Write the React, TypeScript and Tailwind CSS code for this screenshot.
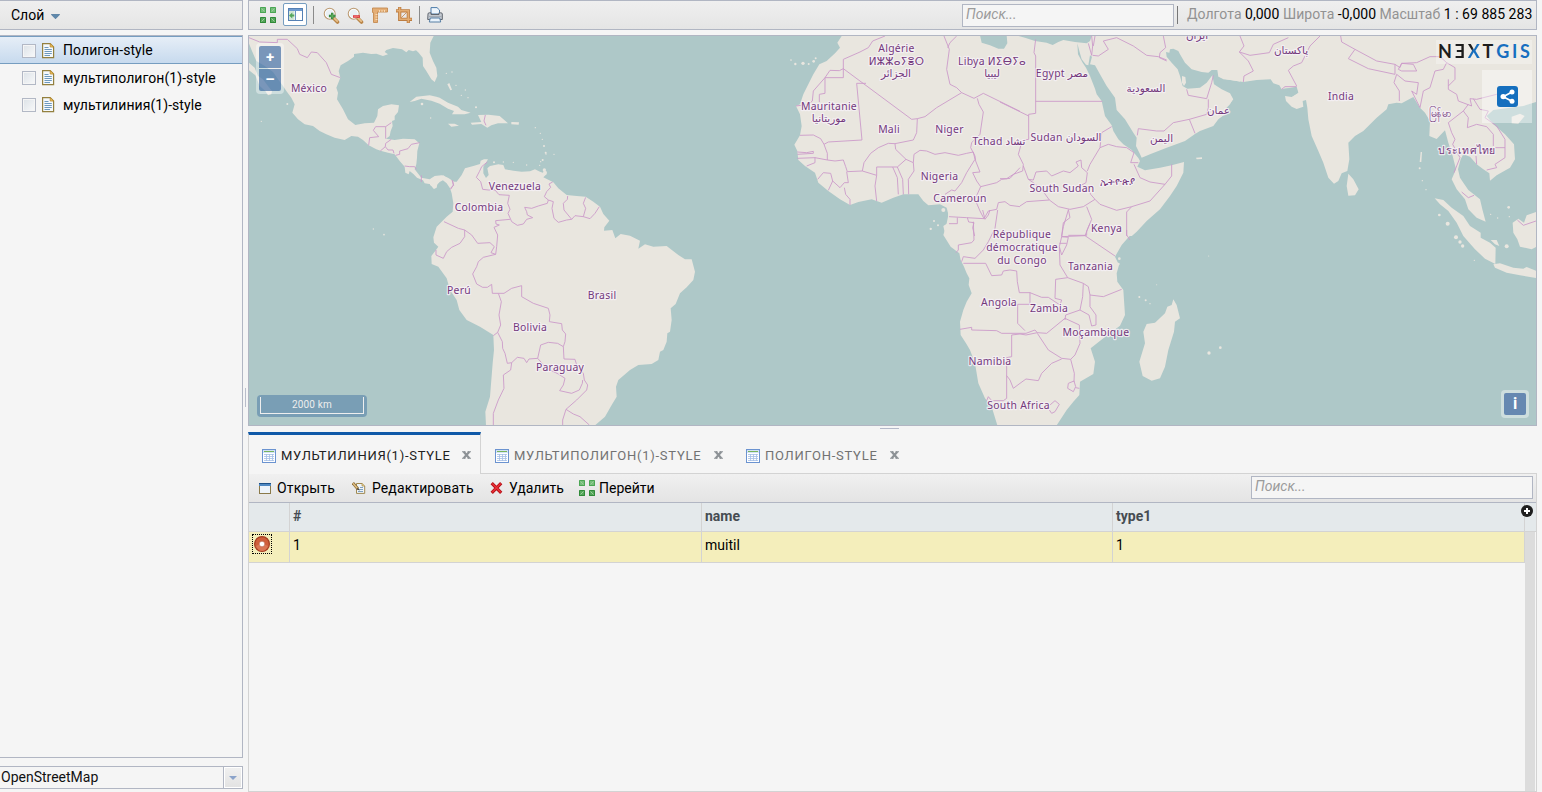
import React from 'react';

const NA_BORDERS = [
  '3,5 35,18 88,20 88,10 118,10 148,38 155,55 178,65 190,48 208,50 235,80 250,115 277,125',
  '362,328 365,305 392,302 376,283 383,272 413,272 413,308', '413,272 430,260', '430,310 413,322 412,332 397,345', '412,332 420,342 435,342 438,352',
  '443,358 455,355 455,345 480,338 490,325 515,320', '470,390 485,392 500,392 505,400', '520,418 520,438', '612,432 617,448 607,457',
  '712,237 708,255 714,268',
];
const SA_BORDERS = [
  '172,36 155,50 148,65 139,82 152,95 158,118 175,120 195,120 207,134 238,136 233,160 240,178 234,190 245,215 262,226 280,222 290,208 308,203 292,195 290,185 284,172 305,175 325,168 352,160 355,150 343,140 350,125 362,112 357,102 368,96',
  '355,150 370,155 366,175 372,205 385,217 410,210 425,208 435,197 460,200 480,206 495,190 508,170',
  '425,208 402,180 400,160 412,148 413,138', '460,200 467,175 460,160 467,142',
  '240,208 197,212 198,222 208,225 192,232 203,255 200,290 197,313 183,308 193,290 180,278 143,280 125,255 104,240 85,235 42,215',
  '104,240 104,260 90,280 65,292 50,305 40,325 18,315 18,300',
  '197,313 160,322 145,335 140,350 128,372 140,402 158,412 172,412 185,403 187,430 205,430 222,430 245,415 275,407 275,440 310,460 355,475 360,495 358,515 395,521 397,540 407,552 405,575 400,590 383,580 355,577 332,585 323,625 297,627 290,638 282,625 262,622 245,638 232,640 225,610 218,595 217,575 203,547 212,525 207,495 214,455 205,430',
  '203,547 190,557', '245,638 242,660 220,675 222,715 205,750 190,790 190,825',
  '400,590 402,627 435,628 440,645 460,670 463,690 473,705 470,720 440,750 408,778 398,810 398,825',
  '323,625 350,655 385,672 405,685 400,705 389,722 425,730 448,720 457,700 458,690', '408,778 430,792 450,800 478,825', '68,92 70,105 62,118',
];
const WA_BORDERS = [
  '315,0 278,15 265,35 240,48 190,70 190,125 135,125 135,172 118,175 118,198', '190,98 178,104 150,103 135,125 100,165 97,195 85,205 48,210',
  '190,98 395,250 412,248 435,242 470,215 545,170 582,187 610,172 720,226', '258,142 230,142 246,312 145,318 132,325 122,308 100,297 60,298',
  '412,248 410,290 400,312 345,323 325,322 295,335 272,352 252,380 247,405 290,418', '132,325 142,352 142,372',
  '52,367 105,365 142,372 165,375 190,372 197,392 202,407 247,405', '52,348 80,350 100,346 100,352 52,355', '105,365 105,380 80,390',
  '113,430 130,410 152,412 158,435 145,463', '158,435 180,455 193,440 205,440 200,407', '193,455 197,475 210,490 210,507',
  '290,495 285,450 290,418 290,393 352,393', '345,323 347,340 378,370 352,393', '338,393 352,425 355,475', '352,393 368,430 370,475',
  '378,370 400,380 402,405 385,430 386,475', '400,380 402,355 420,343 440,345 465,355 495,350 535,358 560,352 580,348 585,370 560,410 545,440 525,465 515,462 495,475',
  '592,187 597,205 610,228 600,295 575,320 572,335 585,360 587,375 600,408 578,410 590,435 602,452', '602,452 650,440 665,430 690,427 720,395',
  '602,452 585,490 600,525 612,548', '492,0 508,40 500,100 510,145 530,155 545,170', '530,0 510,20 503,35',
  '507,542 560,545 612,548 625,525 650,520 655,500 675,497 690,508 720,512', '532,545 532,563 507,563', '562,545 566,558 582,560 578,575 584,600',
];
const EA_BORDERS = [
  '107,10 102,50 107,60 107,232 86,235 86,310 72,312', '0,198 86,240', '107,196 307,196',
  '75,310 62,330 55,355 70,385 68,405 40,415 20,428 0,428',
  '70,390 85,430 100,432 108,408 140,405 155,420 190,405 210,410 235,390 228,378 243,372 245,395 262,410 258,440 240,450',
  '85,430 100,440 125,460 148,492', '60,510 80,497 148,492 175,512 210,520 250,512 285,490 272,475 262,450',
  '262,405 270,385 300,335 305,290 335,272', '300,335 325,325 350,332 380,335 402,350 392,380 415,380', '402,385 420,425 450,438 495,445 515,420 515,385',
  '495,445 450,495 395,512 380,528 380,600', '285,490 300,505 350,523 395,512', '205,520 210,545 190,560 185,600', '260,512 275,550 260,585 260,598 205,598',
  '278,58 295,60 325,40 310,15 350,5 400,30 440,58 475,62 500,72', '490,0 497,35 480,50 478,65 500,75', '560,160 565,178 620,188 635,140 640,118',
  '625,190 625,215 620,235 568,250 520,260 492,285 470,285 415,278 412,298', '568,250 585,292', '265,22 275,58', '275,0 278,30 275,58', '285,0 280,30',
];
const SAF_BORDERS = [
  '188,0 195,28 205,15 210,0', '233,0 225,55 205,95 190,120 165,145 130,140 125,155', '160,35 162,90 155,98 115,105 115,120 108,128',
  '130,160 197,160 215,197 245,195 250,183 270,180 290,183 292,215 298,248 330,248 330,283 293,283 293,340 315,362',
  '120,358 155,352 155,360 230,362 245,370 318,370 345,360 352,368 380,370 435,325 478,345 480,400 465,435 452,448 425,445 385,420 352,370',
  '275,375 275,440 260,443 260,565 250,572', '275,375 300,372 318,375 352,368', '260,497 270,510 280,535 300,520 318,507 355,512 365,490 395,460 425,447',
  '452,448 463,490 462,515', '445,520 462,513 467,530 460,545 443,535 445,520', '467,533 478,535', '390,585 405,572 418,583 405,605 395,610 388,600',
  '330,248 365,262 385,262 420,285 425,270 405,265 407,208 443,203 490,220 488,260 480,300 437,315 435,330', '443,203 420,165 418,110 425,80 495,77 585,138',
  '490,220 505,230 510,255 510,290 528,315 528,345 515,348 507,315 480,300', '510,255 550,260 605,238', '445,0 430,50 425,80', '425,80 445,82 440,105 425,135 418,110',
  '418,100 440,100', '620,60 620,75 630,90', '510,40 495,77', '200,572 205,560 215,572 250,572',
];
const AS_BORDERS = [
  '30,0 42,30 28,48 60,58 118,50 130,25 175,5', '28,48 55,75 70,105 42,120 40,138', '270,0 240,30 215,80 190,90 175,103 200,150', '155,160 165,152 200,152',
  '332,0 335,18 375,40 440,75 495,85 495,115 415,98 355,68 375,40', '505,100 515,82 550,85 560,105 515,105 505,100',
  '495,85 510,95 515,82 560,80 600,62 630,62 650,80 675,95 675,130 655,150', '500,115 525,135 565,140 560,175 545,165 570,215', '500,115 492,140 508,165 508,195',
  '650,80 640,100 615,105 600,155 580,165 570,215', '655,130 655,160 680,175 685,195 725,210', '725,210 720,188 740,190 800,175 820,180',
  '715,205 700,225 655,260 665,290 675,310 668,325 690,365 672,410', '700,225 715,245 712,275 740,265 770,272 790,295 790,330',
  '730,188 750,220 775,225 765,245 800,270 825,310 825,365 795,385 800,395 770,402', '740,385 738,360', '795,335 825,335', '695,468 715,485 732,478',
  '862,552 880,568 918,555',
];

const Borders = ({ lines }: { lines: string[] }) => (
  <g fill="none" stroke="#cc9bca" strokeWidth="2.7" strokeLinejoin="round">
    {lines.map((l, i) => <polyline key={i} points={l} />)}
  </g>
);

const Dots = ({ at }: { at: number[][] }) => (
  <g>{at.map(([x, y, r], i) => <circle key={i} cx={x} cy={y} r={r} />)}</g>
);

const LABELS: [string, number, number][] = [
  ['México', 309, 92], ['Venezuela', 515, 189.5], ['Colombia', 479, 210.5], ['Perú', 459, 293.5], ['Brasil', 602, 298.5], ['Bolivia', 530, 331], ['Paraguay', 560, 371],
  ['Algérie', 896.5, 52], ['ⵍⵣⵣⴰⵢⴻⵔ', 896.5, 64.5], ['الجزائر', 896, 77], ['Libya ⵍⵉⴱⵢⴰ', 992, 65], ['ليبيا', 992, 77],
  ['Egypt مصر', 1062, 76.5], ['Mauritanie', 829, 109.5], ['موريتانيا', 829, 121.5], ['Mali', 889, 133], ['Niger', 949.5, 133], ['Tchad تشاد', 999, 145],
  ['Sudan السودان', 1066, 141], ['Nigeria', 939.5, 180], ['Cameroun', 960, 202], ['South Sudan', 1062, 192], ['ኢትዮጵያ', 1118, 185],
  ['Kenya', 1106.5, 231.5], ['République', 1022, 238], ['démocratique', 1022, 251], ['du Congo', 1022, 263.5], ['Tanzania', 1090.5, 270],
  ['Angola', 999, 305.5], ['Zambia', 1049, 312], ['Moçambique', 1096, 335.5], ['Namibia', 990, 364.5], ['South Africa', 1018.5, 409],
  ['السعودية', 1146, 91.5], ['اليمن', 1161.5, 142], ['عمان', 1218.5, 113.5], ['ایران', 1197, 39], ['پاکستان', 1291, 54], ['India', 1341, 100], ['မြန်မာ', 1440, 117],
  ['ประเทศไทย', 1467, 154],
];

const T3 = (x: number, y: number) => `translate(${x} ${y}) scale(0.33333)`;
const LAND = '#e9e6df';
const SEA = '#aec8c8';

const WorldMap = () => (
  <svg viewBox="249 36 1287 389" className="block h-[389px] w-[1287px]">
    <rect x="249" y="36" width="1287" height="389" fill={SEA} />
    <g fill={LAND}>
      <g transform={T3(248, 36)}>
        <path d="M0,0 L557,0 L547,20 545,50 555,75 565,95 568,120 560,138 550,130 535,105 525,90 524,65 512,50 504,43 495,46 482,42 475,49 462,40 435,36 415,42 410,48 420,55 405,60 385,53 370,54 345,50 318,54 318,62 300,75 278,88 272,105 277,125 265,155 270,170 267,190 285,220 300,250 322,267 350,262 378,260 388,240 390,220 405,210 430,205 453,208 450,228 440,240 440,252 432,255 434,270 428,285 425,300 414,308 440,312 465,308 500,310 514,322 508,345 507,365 505,385 500,400 520,425 545,430 560,420 580,418 600,425 625,442 620,462 610,455 604,435 590,430 575,438 568,445 566,455 556,458 548,445 530,442 525,433 507,425 497,415 485,405 482,415 472,410 470,392 455,375 440,355 420,350 400,345 385,340 362,328 345,312 330,302 310,300 290,312 260,305 235,295 215,285 195,270 170,265 150,250 133,230 140,205 130,185 115,165 105,150 90,130 75,108 50,90 25,75 12,45 0,15 Z" />
        <path d="M0,78 L20,95 30,120 45,130 60,150 72,165 70,175 60,178 52,165 35,150 22,118 0,100Z" />
        <path d="M485,198 L505,182 545,178 565,182 575,185 600,200 630,212 640,222 668,230 650,235 612,235 618,225 600,218 575,203 550,194 520,188 500,195Z" />
        <path d="M600,263 L620,263 633,269 610,272Z M668,260 L700,258 690,237 722,236 755,240 780,262 750,262 730,268 718,275 700,264 672,266Z M790,258 L813,259 812,266 790,265Z M598,145 l6,-4 8,20 -5,2z" />
        <Dots at={[[522, 204, 4], [595, 112, 2], [612, 108, 2], [624, 148, 2], [652, 162, 2], [640, 178, 2], [684, 214, 3], [660, 185, 2], [548, 246, 2], [40, 256, 2], [118, 204, 3], [408, 596, 2.5], [376, 579, 2], [862, 275, 2], [877, 292, 2], [883, 310, 2], [888, 330, 3], [893, 350, 3], [884, 372, 3], [875, 388, 2], [891, 410, 6]]} />
      </g>
      <g transform={T3(430, 150)}>
        <path d="M0,88 L40,76 68,95 80,95 95,75 105,55 130,48 150,42 152,32 162,28 174,28 168,38 160,50 160,70 168,84 176,75 172,55 180,48 205,43 220,45 225,58 250,62 275,65 300,64 315,58 330,65 350,72 340,82 370,97 385,115 410,135 440,138 467,140 490,155 510,170 520,192 538,212 523,232 522,242 547,240 556,265 572,252 600,257 630,272 625,296 645,283 670,290 710,288 745,315 765,328 785,328 795,365 790,390 770,412 750,430 737,462 722,475 725,510 720,545 712,550 710,575 700,600 690,605 685,630 665,642 625,645 600,660 565,690 558,710 560,740 545,765 525,800 495,826 168,826 166,785 180,740 188,640 192,600 190,555 150,530 110,510 88,480 80,450 60,420 50,385 25,350 5,342 4,318 18,300 25,290 12,278 10,262 20,230 50,200 68,185 70,160 65,130 60,115 50,100 35,88 20,105 15,117 0,105Z" />
        <Dots at={[[192, 37, 3], [348, 12, 2], [372, 13, 2], [343, 60, 5], [220, 36, 2], [250, 37, 2], [290, 45, 2], [332, 35, 2]]} />
      </g>
      <g transform={T3(780, 36)}>
        <path d="M185,0 L172,20 180,35 165,52 140,75 118,85 100,115 85,145 70,175 60,205 48,210 60,235 65,270 60,298 43,326 52,345 55,372 75,390 105,410 115,440 145,465 180,490 210,507 235,498 275,490 305,500 340,485 370,475 415,475 430,495 445,508 480,505 500,515 505,535 505,560 490,570 497,602 722,602 722,0Z" />
        <Dots at={[[33, 72, 2.5], [46, 84, 3.5], [69, 82, 5], [86, 84, 3], [101, 76, 4], [107, 67, 3], [490, 522, 6], [474, 568, 3], [452, 578, 3]]} />
      </g>
      <rect x="1000" y="36" width="240" height="200" />
      <g transform={T3(920, 210)}>
        <path d="M84,-5 L84,20 78,50 70,75 92,110 118,130 122,150 132,170 140,190 148,205 146,225 155,250 140,275 130,300 120,335 122,375 138,400 150,420 165,460 175,520 195,565 215,590 232,646 410,646 440,600 460,575 478,555 480,515 520,492 525,455 512,415 550,385 600,347 615,315 610,240 592,215 590,190 597,165 585,140 605,105 640,65 690,25 722,-2Z" />
        <path d="M760,268 L770,285 780,325 765,335 762,365 745,420 735,470 720,505 695,512 668,498 658,455 675,400 670,365 680,342 705,338 735,310 742,290 755,285Z" />
        <Dots at={[[867, 429, 5], [901, 413, 4], [32, 57, 3], [658, 261, 3], [677, 271, 3], [690, 281, 2], [598, 146, 4], [595, 162, 4], [42, 33, 3], [710, 224, 1.5], [866, 138, 1.5]]} />
      </g>
    </g>
    <g transform={T3(780, 36)} fill={SEA}><path d="M600,-2 L605,20 630,28 655,38 672,38 682,22 680,-2Z" /></g>
    <g transform={T3(1000, 36)}>
      <path fill={SEA} d="M48,-2 L75,5 105,15 140,20 158,27 175,18 190,12 225,18 260,22 270,15 276,-2Z M232,22 L234,55 248,80 258,95 270,120 285,158 290,175 305,195 315,240 335,268 340,285 355,310 370,325 395,342 415,366 420,375 412,392 435,403 480,395 515,388 552,378 550,410 530,450 510,480 480,520 440,555 410,587 393,602 723,602 723,137 680,130 655,122 652,102 635,102 625,110 605,108 575,100 555,80 540,55 535,45 520,38 510,40 508,50 498,48 500,62 515,80 533,100 540,120 548,150 562,158 600,155 620,140 637,118 642,145 665,160 690,172 699,188 690,205 680,215 675,235 655,250 640,270 600,285 585,294 555,315 500,335 450,355 425,365 418,350 408,330 410,305 400,290 375,250 350,222 345,185 320,150 300,115 285,88 270,85 276,62 270,58 265,88 258,86 245,70 238,45Z" />
      <path fill={LAND} d="M546,120 L556,123 558,140 552,150 546,140Z M588,365 L606,364 606,369 590,370Z" />
    </g>
    <g transform={T3(1230, 36)} fill={LAND}>
      <path d="M-32,-2 L-32,123 -20,130 0,132 40,138 80,132 122,130 130,142 148,148 155,160 200,152 205,170 185,183 165,180 168,195 185,212 200,219 220,212 218,195 228,192 232,215 235,250 245,300 265,345 280,380 295,425 312,443 325,435 335,412 352,405 358,370 355,320 375,300 400,285 440,245 470,220 475,205 500,200 515,202 550,183 570,215 585,230 600,255 598,300 620,309 645,283 655,320 668,360 678,400 665,430 680,460 705,490 715,520 740,545 767,557 757,520 750,490 735,478 715,462 700,440 690,425 684,400 692,370 700,355 720,362 740,385 760,400 778,412 780,434 800,418 840,395 855,370 852,325 825,295 790,265 770,240 790,222 840,215 880,210 920,197 920,-2Z" />
      <path d="M355,413 L370,430 386,460 375,478 355,479 350,450Z M614,487 L640,492 665,515 700,540 720,570 752,590 752,605 780,620 797,635 796,684 765,668 735,640 700,600 680,560 655,525 630,505Z M790,685 L810,682 850,695 880,698 890,693 920,705 920,726 870,718 830,710 795,695Z M920,527 L890,538 882,560 865,548 848,560 850,590 862,610 870,632 905,640 920,632Z M845,242 L870,233 884,240 865,263 845,262Z M782,612 L800,612 808,630 795,625Z M572,348 l4,0 -2,30 -5,0z" />
      <path d="M-2,183 L10,190 -2,205Z" />
      <Dots at={[[830, 631, 6], [836, 514, 4], [653, 563, 6], [628, 537, 4], [678, 604, 6], [690, 618, 5], [698, 630, 5], [569, 397, 3], [577, 434, 2], [588, 461, 2], [733, 673, 2], [838, 542, 2], [782, 535, 2], [803, 546, 2]]} />
      <path fill={SEA} d="M160,158 L200,156 203,170 188,180 165,176 182,165Z" />
    </g>
    <g transform={T3(248, 36)}><Borders lines={NA_BORDERS} /></g>
    <g transform={T3(430, 150)}><Borders lines={SA_BORDERS} /></g>
    <g transform={T3(780, 36)}><Borders lines={WA_BORDERS} /></g>
    <g transform={T3(1000, 36)}><Borders lines={EA_BORDERS} /></g>
    <g transform={T3(920, 210)}><Borders lines={SAF_BORDERS} /></g>
    <g transform={T3(1230, 36)}><Borders lines={AS_BORDERS} /></g>
    <g className="font-['Noto_Sans','DejaVu_Sans',sans-serif] text-[10.4px] tracking-[0.28px]" fill="#74397c" stroke="#f6f1f6" strokeOpacity="0.85" strokeWidth="2.4" strokeLinejoin="round" style={{ paintOrder: 'stroke' }} textAnchor="middle">
      {LABELS.map(([t, x, y]) => <text key={t} x={x} y={y}>{t}</text>)}
    </g>
  </svg>
);

const Arrows = () => (
  <svg viewBox="0 0 16 16" className="size-4 shrink-0">
    {[[0, 0], [10, 0], [0, 10], [10, 10]].map(([x, y], i) => (
      <g key={i} transform={`translate(${x} ${y})`}>
        <rect width="6" height="6" rx="0.6" fill={i > 1 ? '#2f8a38' : '#4aa653'} />
        <rect x="1" y="1" width="4" height="4" fill={i > 1 ? '#56a55c' : '#76bd7b'} />
        <path d={i === 0 || i === 3 ? 'M1.5,1.5 L4.5,4.5' : 'M4.5,1.5 L1.5,4.5'} stroke="#98d098" strokeWidth="1" />
      </g>
    ))}
  </svg>
);

const Magnifier = ({ plus }: { plus?: boolean }) => (
  <svg viewBox="0 0 17 17" className="h-[17px] w-[17px] shrink-0">
    <path d="M10.5,11 L14.5,15" stroke="#b98548" strokeWidth="3.6" strokeLinecap="round" />
    <path d="M10.8,10.8 L14.2,14.2" stroke="#e8c08a" strokeWidth="1.8" strokeLinecap="round" />
    <circle cx="6.7" cy="6.7" r="5.4" fill="#e9f0f4" stroke="#bd9c74" strokeWidth="1.2" />
    <circle cx="6.7" cy="6.7" r="4.4" fill="none" stroke="#fff" strokeWidth="0.9" />
    {plus
      ? <path d="M9.2,5.7 V12.3 M5.9,9 H12.5" stroke="#2c7d34" strokeWidth="2.3" />
      : <path d="M6,9.5 H13" stroke="#d9262c" strokeWidth="2.4" />}
    {plus ? <path d="M9.2,6.4 V11.6 M6.6,9 H11.8" stroke="#6bbb68" strokeWidth="0.9" /> : <path d="M6.6,9.4 H12.4" stroke="#f47b77" strokeWidth="0.9" />}
  </svg>
);

const TableIcon = () => (
  <svg viewBox="0 0 14 14" className="size-[14px] shrink-0">
    <rect x="0.5" y="0.5" width="13" height="13" fill="#fff" stroke="#6b93d0" />
    <rect x="1" y="1" width="12" height="3" fill="#d3e2f5" />
    <path d="M2,2.5 H12" stroke="#78b45c" strokeWidth="1" />
    <path d="M2,5.5 H12 M2,7.5 H12 M2,9.5 H12 M2,11.5 H12 M4.5,5 V12 M7.5,5 V12 M10.5,5 V12" stroke="#a3bee6" strokeWidth="0.8" />
  </svg>
);

const DocIcon = () => (
  <svg viewBox="0 0 13 16" className="h-4 w-[13px] shrink-0">
    <path d="M0.6,0.6 H8.2 L11.6,4 V14.6 H0.6 Z" fill="#f5f9fc" stroke="#93803f" strokeWidth="1.2" />
    <path d="M8.2,0.6 V4 H11.6 Z" fill="#f3cc68" stroke="#b7862a" strokeWidth="0.8" />
    <path d="M2.5,4.5 H6.5 M2.5,6.5 H9.8 M2.5,8.5 H9.8 M2.5,10.5 H9.8 M2.5,12.5 H8" stroke="#6d99bd" strokeWidth="1" />
  </svg>
);

const Layer = ({ label, active }: { label: string; active?: boolean }) => (
  <div className={`flex items-center border-y pl-[22px] ${active ? 'h-7 border-[#769dc0] bg-gradient-to-b from-[#e6eef7] to-[#c7daee]' : 'h-[27px] border-transparent'}`}>
    <span className={`size-[14px] border border-[#b2b8c5] bg-gradient-to-br from-[#dce2e7] to-[#f8f9fa] shadow-[inset_0_0_0_1px_#f5f5f5] ${active ? 'mt-[2px]' : 'mt-[1px]'}`} />
    <span className="ml-[6px] flex pt-px"><DocIcon /></span>
    <span className="ml-2 text-sm leading-5 tracking-[0.06px] whitespace-nowrap text-black">{label}</span>
  </div>
);

const Tab = ({ label, active, textWidth }: { label: string; active?: boolean; textWidth: string }) => (
  <div className={`flex h-[42px] items-center border-t-[3px] pl-[13px] ${active ? 'border-x border-t-[#0f59a8] border-x-[#d3d3d3] pr-[9px] text-[#212121]' : 'border-b border-t-transparent border-b-[#d3d3d3] pl-[14px] pr-[9px] text-[#727272]'}`}>
    <span className={`flex ${active ? 'mt-[2px]' : 'mt-[3px]'}`}><TableIcon /></span>
    <span className={`ml-[5px] text-[13px] tracking-[0.74px] whitespace-nowrap uppercase ${active ? 'mt-[3px]' : 'mt-1'} ${textWidth}`}>{label}</span>
    <svg viewBox="0 0 9 8" className={`ml-3 h-2 w-[9px] ${active ? 'mt-px' : 'mt-[2px]'}`}><path d="M1.7,0.8 L7.3,7.2 M7.3,0.8 L1.7,7.2" stroke="#8d9296" strokeWidth="2.2" /><path d="M0,0.7 H3.5 M5.5,0.7 H9 M0,7.3 H3.5 M5.5,7.3 H9" stroke="#8d9296" strokeWidth="1.1" /></svg>
  </div>
);

const Cell = ({ children, first, head }: { children?: React.ReactNode; first?: boolean; head?: boolean }) => (
  <div className={`border-r border-[#d3d3d3] pt-[3px] pl-[3px] text-sm ${first ? 'w-[412px]' : 'w-[411px]'} ${head ? 'font-bold text-[#464c52]' : 'text-black'}`}>{children}</div>
);

export default function App() {
  return (
    <div className="flex h-[792px] w-[1542px] overflow-hidden bg-[#f5f5f5] font-[Roboto,sans-serif] text-sm text-black">
      <aside className="flex w-[243px] shrink-0 flex-col">
        <div className="flex h-[30px] items-center border-y border-r border-[#b1b6c3] bg-gradient-to-b from-[#efefef] to-[#e5e5e5] pl-[11px]">
          <span>Слой</span>
          <svg viewBox="0 0 9 5" className="mt-0.5 ml-[7px] h-[5px] w-[9px]"><path d="M0.3,0.5 H8.7 L4.5,4.8Z" fill="#5f89ac" stroke="#45719a" strokeWidth="0.7" /></svg>
        </div>
        <div className="mt-[5px] h-[723px] border-y border-r border-[#b1b6c3]">
          <Layer label="Полигон-style" active />
          <Layer label="мультиполигон(1)-style" />
          <Layer label="мультилиния(1)-style" />
        </div>
        <div className="mt-2 flex h-[23px] border-y border-r border-[#b1b6c3]">
          <span className="w-[224px] border-r border-[#b1b6c3] pl-px leading-[21px] text-[#111]">OpenStreetMap</span>
          <span className="flex flex-1 items-center justify-center border border-white bg-gradient-to-b from-[#f0f0f0] to-[#e3e3e3]">
            <svg viewBox="0 0 8 4" className="h-1 w-2"><path d="M0,0 H8 L4,4Z" fill="#8ba3ca" /></svg>
          </span>
        </div>
      </aside>
      <div className="flex w-[5px] shrink-0 items-center justify-center pt-0.5"><span className="h-[19px] w-px bg-[#b9bdca]" /></div>
      <main className="flex w-[1289px] shrink-0 flex-col">
        <div className="flex h-[30px] items-center border border-[#b1b6c3] bg-gradient-to-b from-[#efefef] to-[#e5e5e5] pl-[11px]">
          <Arrows />
          <span className="mb-px ml-[7px] flex h-[23px] w-6 items-center justify-center rounded-[2px] border border-[#769dc0] bg-white">
            <svg viewBox="0 0 15 13" className="h-[13px] w-[15px]">
              <rect x="0.5" y="0.5" width="14" height="12" fill="#fff" stroke="#5580b4" />
              <rect x="1" y="1" width="13" height="2" fill="#6f9bd0" /><rect x="1" y="3" width="5.5" height="9" fill="#d3e6d6" /><path d="M7.5,3 V12" stroke="#6b93c0" />
              <path d="M1,7.5 L4.3,4.6 V6.4 H6.3 V8.6 H4.3 V10.4Z" fill="#55a75c" />
            </svg>
          </span>
          <span className="ml-[6px] h-[18px] w-px bg-[#8b8b8b]" />
          <span className="ml-[9px] flex"><Magnifier plus /></span>
          <span className="ml-[7px] flex"><Magnifier /></span>
          <svg viewBox="0 0 16 16" className="ml-2 size-4">
            <path d="M0.5,1 H15.5 V5 H5.5 V15.5 H1.5 V5.5 H0.5Z" fill="#e4ae76" stroke="#c48a50" strokeWidth="0.9" />
            <path d="M7.5,3 v2 M10,3 v2 M12.5,3 v2 M3.5,7.5 h2 M3.5,10 h2 M3.5,12.5 h2" stroke="#fbe6c8" strokeWidth="0.8" />
          </svg>
          <svg viewBox="0 0 16 16" className="ml-2 size-4">
            <path d="M0,3.8 H12.3 V16 M3.7,0 V12.3 H16" fill="none" stroke="#bd7d40" strokeWidth="3.2" />
            <path d="M0.5,3.8 H12.3 V15.5 M3.7,0.5 V12.3 H15.5" fill="none" stroke="#e4ac70" strokeWidth="1.5" />
            <path d="M5,11 L11,5" stroke="#c98f55" strokeWidth="0.9" />
          </svg>
          <span className="ml-[7px] h-[18px] w-px bg-[#8b8b8b]" />
          <svg viewBox="0 0 16 16" className="ml-[7px] size-4">
            <path d="M4,7 V0.6 H10 L12.5,3 V7Z" fill="#eef5fc" stroke="#4c7ba9" strokeWidth="1" />
            <path d="M1,7 Q1,5.8 2.3,5.8 H4 V7.5 H12 V5.8 H13.7 Q15.3,5.8 15.3,7 V12.5 H0.7Z" fill="#c6cbd2" stroke="#60666f" strokeWidth="1" />
            <path d="M1.3,9.5 H14.7" stroke="#a4abb4" strokeWidth="1.2" /><path d="M3.3,11 H12.7 L13.7,15 H2.3Z" fill="#e9f3fc" stroke="#577ea4" strokeWidth="1" />
          </svg>
          <div className="ml-auto h-[23px] w-[212px] border border-[#b1b6c3] bg-[#f5f5f5] pl-[3px] leading-[19px] text-[#9b9b9b] italic">Поиск...</div>
          <span className="ml-[3px] h-[18px] w-px bg-[#777]" />
          <div className="mb-[2px] ml-[9px] w-[345px] text-[14px] tracking-[0.03px] whitespace-nowrap text-[#929292]">
            Долгота <span className="text-black">0,000</span> Широта <span className="text-black">-0,000</span> Масштаб <span className="text-black">1 : 69 885 283</span>
          </div>
          <span className="w-1 shrink-0" />
        </div>
        <div className="relative mt-[5px] h-[391px] border border-[#b1b6c3]">
          <WorldMap />
          <div className="absolute top-[7px] left-[7px] flex flex-col gap-px rounded bg-white/40 p-[3px] text-center text-[15px] font-bold text-white">
            <span className="h-[22px] w-[22px] rounded-t-[2px] bg-[#003c88]/50 leading-[22px]">+</span>
            <span className="h-[22px] w-[22px] rounded-b-[2px] bg-[#003c88]/50 leading-[21px]">–</span>
          </div>
          <div className="absolute top-[4px] right-[4px] flex h-6 w-[96px] items-center justify-between bg-white/30 pr-[2px] pb-[2px] pl-[2px] font-[Lato,sans-serif] text-[18px] leading-none font-bold text-[#1d1d1d]">
            <span>N</span><span className="-scale-x-100">E</span><span className="bg-gradient-to-br from-[#1d1d1d] from-35% to-[#176fc0] to-45% bg-clip-text text-transparent">X</span><span>T</span>
            <span className="text-[#176fc0]">G</span><span className="text-[#176fc0]">I</span><span className="text-[#176fc0]">S</span>
          </div>
          <div className="absolute top-[34px] right-[4px] flex h-[53px] w-[50px] items-center justify-center bg-white/40 pb-px">
            <svg viewBox="0 0 21 21" className="size-[21px]">
              <rect width="21" height="21" rx="3" fill="#156fbe" />
              <path d="M15,6 L6.2,10.7 L15,15.2" fill="none" stroke="#fff" strokeWidth="1.7" />
              <circle cx="15" cy="6" r="2.5" fill="#fff" /><circle cx="6.2" cy="10.6" r="2.7" fill="#fff" /><circle cx="15" cy="15.2" r="2.5" fill="#fff" />
            </svg>
          </div>
          <div className="absolute bottom-2 left-2 h-[22px] w-[110px] rounded bg-[#003c88]/30 p-[3px] pt-[2px]">
            <div className="h-[17px] border border-t-0 border-[#eee] text-center text-[10px] leading-[15px] tracking-[0.2px] text-[#eee]">2000 km</div>
          </div>
          <div className="absolute right-[7px] bottom-[7px] size-7 rounded bg-white/40 p-[3px]">
            <div className="size-[22px] rounded-[2px] bg-[#6688b1] text-center text-base leading-[22px] font-bold text-white">i</div>
          </div>
        </div>
        <div className="flex h-[6px] justify-center pt-[2px] pr-[6px]"><span className="h-px w-[19px] bg-[#b4b9c9]" /></div>
        <div className="flex h-[42px]">
          <Tab label="мультилиния(1)-style" active textWidth="w-[169px]" />
          <Tab label="мультиполигон(1)-style" textWidth="w-[188px]" />
          <Tab label="Полигон-style" textWidth="w-[113px]" />
          <div className="flex-1 border-b border-[#d3d3d3]" />
        </div>
        <section className="h-[318px] border-x border-b border-[#d3d3d3]">
          <div className="flex h-[29px] items-center border-b border-[#b1b6c3] bg-gradient-to-b from-[#f0f0f0] to-[#e4e4e4] pl-[10px]">
            <svg viewBox="0 0 12 11" className="h-[11px] w-3"><rect x="0.5" y="0.5" width="11" height="10" fill="#edf3fa" stroke="#8b7a4a" /><rect width="12" height="3" fill="#4f88c2" /><path d="M0,0.5 H12" stroke="#1c4f86" strokeWidth="1" /></svg>
            <span className="ml-[6px] w-[59px] tracking-[0.14px] whitespace-nowrap">Открыть</span>
            <svg viewBox="0 0 14 14" className="ml-4 size-[14px]">
              <path d="M4.5,2.5 H10 L12.7,5 V12.4 H4.5Z" fill="#eef4f9" stroke="#a08950" /><path d="M10,2.5 V5 H12.7" fill="#efd08a" stroke="#a08950" strokeWidth="0.7" />
              <path d="M8,6.5 H11 M7,8.5 H11 M6,10.5 H11" stroke="#7196b8" strokeWidth="0.9" />
              <path d="M0.8,2 L6,8" stroke="#86683a" strokeWidth="3" /><path d="M1,2.2 L5.3,7.2" stroke="#e2c180" strokeWidth="1.4" /><path d="M6,7 L7.8,9.6 L5,8.6Z" fill="#333" />
            </svg>
            <span className="ml-[6px] w-[102px] tracking-[0.1px] whitespace-nowrap">Редактировать</span>
            <svg viewBox="0 0 13 12" className="ml-4 h-3 w-[13px]"><path d="M1.7,1.2 L11.2,10.8 M11.2,1.2 L1.7,10.8" stroke="#b30f16" strokeWidth="3.2" /><path d="M2.2,1.5 L10.7,10.3 M10.7,1.5 L2.2,10.3" stroke="#ea3037" strokeWidth="1.5" /></svg>
            <span className="ml-[6px] w-[55px] whitespace-nowrap">Удалить</span>
            <span className="ml-[15px] flex"><Arrows /></span>
            <span className="ml-1">Перейти</span>
            <div className="mr-[3px] mb-[2px] ml-auto h-[23px] w-[282px] border border-[#b1b6c3] bg-[#f5f5f5] pl-[3px] leading-[19px] text-[#9b9b9b] italic">Поиск...</div>
          </div>
          <div className="relative flex h-[29px] border-b border-[#d3d3d3] bg-[#e4e9eb]">
            <div className="w-[41px] border-r border-[#d3d3d3]" />
            <Cell first head>#</Cell><Cell head>name</Cell><Cell first head>type1</Cell>
            <svg viewBox="0 0 12 12" className="absolute top-[2px] right-[3px] size-3"><circle cx="6" cy="6" r="6" fill="#1f1f1f" /><path d="M6,3 V9 M3,6 H9" stroke="#fff" strokeWidth="2" /></svg>
          </div>
          <div className="flex h-[259px]">
            <div className="flex h-[31px] w-[1276px] border-b border-[#d3d3d3] bg-[#f4eebb]">
              <div className="flex w-[41px] border-r border-[#d3d3d3] pt-[2px] pl-[3px]">
                <span className="flex size-5 items-center justify-center border border-dotted border-black">
                  <svg viewBox="0 0 16 16" className="size-4"><circle cx="8" cy="8" r="7.4" fill="#cf5e3b" stroke="#a63e22" strokeWidth="1.2" /><path d="M2,10 Q8,6 14,10 Q12,15 8,15 Q4,15 2,10" fill="#da7654" /><circle cx="8" cy="8" r="2.8" fill="#fff" stroke="#b75c42" strokeWidth="0.6" /></svg>
                </span>
              </div>
              <Cell first>1</Cell><Cell>muitil</Cell><Cell first>1</Cell>
            </div>
            <div className="w-[10px] bg-[#dcdcdc]" />
          </div>
        </section>
      </main>
    </div>
  );
}
